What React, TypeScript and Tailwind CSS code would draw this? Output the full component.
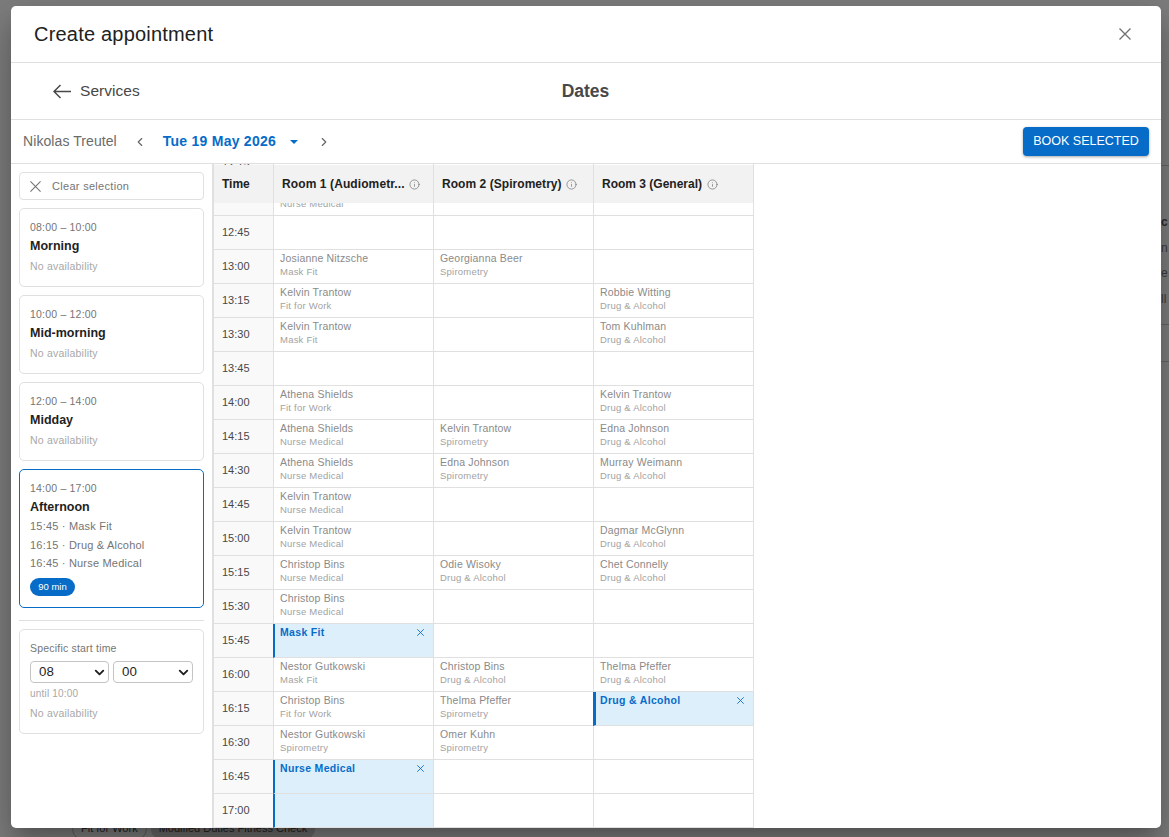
import { ChevronLeft, ChevronRight, ChevronDown, Info } from "lucide-react";
import type { ReactNode } from "react";

type Cell = null | [string, string] | { sel: string };

const rows: [string, Cell, Cell, Cell][] = [
  ["12:15", null, null, null],
  ["12:30", ["Athena Shields", "Nurse Medical"], null, null],
  ["12:45", null, null, null],
  ["13:00", ["Josianne Nitzsche", "Mask Fit"], ["Georgianna Beer", "Spirometry"], null],
  ["13:15", ["Kelvin Trantow", "Fit for Work"], null, ["Robbie Witting", "Drug & Alcohol"]],
  ["13:30", ["Kelvin Trantow", "Mask Fit"], null, ["Tom Kuhlman", "Drug & Alcohol"]],
  ["13:45", null, null, null],
  ["14:00", ["Athena Shields", "Fit for Work"], null, ["Kelvin Trantow", "Drug & Alcohol"]],
  ["14:15", ["Athena Shields", "Nurse Medical"], ["Kelvin Trantow", "Spirometry"], ["Edna Johnson", "Drug & Alcohol"]],
  ["14:30", ["Athena Shields", "Nurse Medical"], ["Edna Johnson", "Spirometry"], ["Murray Weimann", "Drug & Alcohol"]],
  ["14:45", ["Kelvin Trantow", "Nurse Medical"], null, null],
  ["15:00", ["Kelvin Trantow", "Nurse Medical"], null, ["Dagmar McGlynn", "Drug & Alcohol"]],
  ["15:15", ["Christop Bins", "Nurse Medical"], ["Odie Wisoky", "Drug & Alcohol"], ["Chet Connelly", "Drug & Alcohol"]],
  ["15:30", ["Christop Bins", "Nurse Medical"], null, null],
  ["15:45", { sel: "Mask Fit" }, null, null],
  ["16:00", ["Nestor Gutkowski", "Mask Fit"], ["Christop Bins", "Drug & Alcohol"], ["Thelma Pfeffer", "Drug & Alcohol"]],
  ["16:15", ["Christop Bins", "Fit for Work"], ["Thelma Pfeffer", "Spirometry"], { sel: "Drug & Alcohol" }],
  ["16:30", ["Nestor Gutkowski", "Spirometry"], ["Omer Kuhn", "Spirometry"], null],
  ["16:45", { sel: "Nurse Medical" }, null, null],
  ["17:00", { sel: "" }, null, null],
];

function Cross({ className, width = 1.4 }: { className: string; width?: number }) {
  return (
    <svg viewBox="0 0 12 12" fill="none" stroke="currentColor" strokeWidth={width} className={className}>
      <path d="M0.5 0.5 11.5 11.5M11.5 0.5 0.5 11.5" />
    </svg>
  );
}

function BodyCell({ cell, thick }: { cell: Cell; thick?: boolean }) {
  if (cell === null) return <div className="h-[34px] w-40 shrink-0 border-r border-b border-[#e0e0e0]" />;
  if (Array.isArray(cell))
    return (
      <div className="h-[34px] w-40 shrink-0 border-r border-b border-[#e0e0e0] pl-1.5 pt-[2px]">
        <div className="text-[10.5px] leading-[13px] tracking-[0.18px] text-[#8a8a8a]">{cell[0]}</div>
        <div className="text-[9.5px] leading-[13px] tracking-[0.22px] text-[#a2a2a2]">{cell[1]}</div>
      </div>
    );
  return (
    <div
      className={`relative -ml-[1px] h-[34px] w-[161px] shrink-0 border-r border-b border-r-[#e0e0e0] border-b-[#e0e0e0] bg-[#deeffc] pt-[2px] ${thick ? "border-l-[3px] border-l-[#066cc8] pl-[4px]" : "border-l-[2px] border-l-[#066cc8] pl-[5px]"}`}
    >
      {cell.sel && (
        <>
          <div className="text-[10.5px] font-bold leading-[13px] tracking-[0.32px] text-[#066cc8]">{cell.sel}</div>
          <Cross className="absolute right-[9px] top-[5px] h-[7px] w-[7px] text-[#066cc8]" width={1.5} />
        </>
      )}
    </div>
  );
}

function Slot({ time, title, children, active }: { time: string; title: string; children?: ReactNode; active?: boolean }) {
  return (
    <div className={`rounded-[5px] border px-2.5 pt-[12px] ${active ? "h-[139px] border-[#066cc8]" : "h-[79px] border-[#e0e0e0]"}`}>
      <div className="text-[10.5px] leading-[13px] tracking-[0.2px] text-[#757575]">{time}</div>
      <div className="mt-[3.5px] text-[12.5px] font-bold leading-[16px] text-[#1f1f1f]">{title}</div>
      {children ?? <div className="mt-[5.5px] text-[10.5px] leading-[14px] tracking-[0.2px] text-[#a8a8a8]">No availability</div>}
    </div>
  );
}

function Sel({ v, w }: { v: string; w: string }) {
  return (
    <div className={`flex h-[22px] items-center justify-between rounded-[4px] border border-[#c4c4c4] pl-2 pr-[1px] text-[13.3px] text-[#1f1f1f] ${w}`}>
      {v}
      <ChevronDown className="h-[15px] w-[15px] text-[#1f1f1f]" strokeWidth={3} />
    </div>
  );
}

export default function App() {
  return (
    <div className="relative h-[837px] w-[1169px] overflow-hidden bg-[#7e7e7e] font-['Liberation_Sans',Arial,sans-serif]">
      {/* dimmed page behind the dialog */}
      <div className="absolute left-[1161px] top-[165px] h-[197px] w-[8px] overflow-hidden border-y border-[#666666] text-[12px] text-[#2c2c2c]">
        <div className="absolute left-0 top-[47px] font-bold">c</div>
        <div className="absolute left-0 top-[73px] text-[#3c3c3c]">n</div>
        <div className="absolute left-0 top-[98px] text-[#3c3c3c]">e</div>
        <div className="absolute left-0 top-[124px] text-[#3c3c3c]">ll</div>
        <div className="absolute left-0 top-[158px] w-full border-t border-[#666666]" />
      </div>
      <div className="absolute left-[72px] top-[816px] flex items-center gap-[4px] text-[11px] text-[#222222]">
        <span className="rounded-full border border-[#5e5e5e] px-2 py-[3px]">Fit for Work</span>
        <span className="rounded-full bg-[#6a6a6a] px-2 py-[3px]">Modified Duties Fitness Check</span>
      </div>

      {/* dialog */}
      <div className="absolute left-[11px] top-[6px] flex h-[822px] w-[1150px] flex-col overflow-hidden rounded-[5px] bg-white shadow-[0_11px_15px_-7px_rgba(0,0,0,0.2),0_24px_38px_3px_rgba(0,0,0,0.14),0_9px_46px_8px_rgba(0,0,0,0.12)]">
        <header className="flex h-[57px] shrink-0 items-center justify-between border-b border-[#e0e0e0] pl-[23px] pr-[30px]">
          <h2 className="text-[20px] leading-[24px] tracking-[0.2px] text-[#212121]">Create appointment</h2>
          <Cross className="h-[12px] w-[12px] text-[#707070]" width={1.3} />
        </header>

        <div className="relative flex h-[57px] shrink-0 items-center justify-center border-b border-[#e0e0e0]">
          <div className="absolute left-[42px] top-[18px] flex items-center gap-[9px] text-[#484848]">
            <svg viewBox="0 0 18 15" fill="none" stroke="currentColor" strokeWidth={1.5} className="h-[15px] w-[18px]">
              <path d="M0.8 7.5H18M7.5 1 1 7.5 7.5 14" />
            </svg>
            <span className="text-[15.5px] leading-[20px] tracking-[0.05px]">Services</span>
          </div>
          <div className="-ml-[1px] text-[17.5px] font-bold leading-[22px] text-[#484848]">Dates</div>
        </div>

        <div className="flex h-[44px] shrink-0 items-center border-b border-[#e0e0e0] pl-[12px] pr-[12px]">
          <span className="text-[14px] tracking-[0.08px] text-[#6b6b6b]">Nikolas Treutel</span>
          <ChevronLeft className="ml-[16px] h-[14px] w-[14px] text-[#666666]" strokeWidth={2} />
          <span className="ml-[16px] text-[14px] font-bold tracking-[0.25px] text-[#066cc8]">Tue 19 May 2026</span>
          <span className="ml-[14px] h-0 w-0 border-x-[4px] border-t-[4px] border-x-transparent border-t-[#066cc8]" />
          <ChevronRight className="ml-[19px] h-[14px] w-[14px] text-[#666666]" strokeWidth={2} />
          <button className="ml-auto h-[29px] w-[126px] rounded-[4px] bg-[#066cc8] text-[12.5px] font-medium text-white shadow-[0_1px_3px_rgba(0,0,0,0.35)]">
            BOOK SELECTED
          </button>
        </div>

        <div className="flex min-h-0 flex-1">
          <aside className="flex w-[201px] shrink-0 flex-col gap-[8px] pl-[8px] pt-[8px]">
            <div className="flex h-[28px] w-[185px] items-center rounded-[4px] border border-[#e0e0e0] pl-[10px] text-[11px] tracking-[0.3px] text-[#757575]">
              <Cross className="mr-[11px] h-[11px] w-[11px]" width={1.2} />
              Clear selection
            </div>
            <div className="flex w-[185px] flex-col gap-[8px]">
              <Slot time="08:00 – 10:00" title="Morning" />
              <Slot time="10:00 – 12:00" title="Mid-morning" />
              <Slot time="12:00 – 14:00" title="Midday" />
              <Slot time="14:00 – 17:00" title="Afternoon" active>
                <div className="mt-[2.5px] text-[11px] leading-[18.7px] tracking-[0.2px] text-[#757575]">
                  <div>15:45 · Mask Fit</div>
                  <div>16:15 · Drug &amp; Alcohol</div>
                  <div>16:45 · Nurse Medical</div>
                </div>
                <div className="mt-[5px] w-[45px] rounded-full bg-[#066cc8] text-center text-[9.5px] leading-[18px] text-white">90 min</div>
              </Slot>
              <div className="mt-[4px] border-t border-[#e0e0e0] pt-[8px]">
                <div className="h-[105px] rounded-[5px] border border-[#e0e0e0] px-2.5 pt-[12px]">
                  <div className="text-[10.5px] leading-[13px] tracking-[0.2px] text-[#757575]">Specific start time</div>
                  <div className="mt-[6px] flex gap-[4px]"><Sel v="08" w="w-[79px]" /><Sel v="00" w="w-[80px]" /></div>
                  <div className="mt-[4px] text-[10px] leading-[13px] tracking-[0.2px] text-[#a8a8a8]">until 10:00</div>
                  <div className="mt-[6px] text-[10.5px] leading-[14px] tracking-[0.2px] text-[#a8a8a8]">No availability</div>
                </div>
              </div>
            </div>
          </aside>

          <div className="relative min-w-0 flex-1 overflow-hidden border-l-[2px] border-[#e0e0e0]">
            <div className="-mt-[16px]">
              {rows.map(([t, a, b, c]) => (
                <div key={t} className="flex">
                  <div className="flex h-[34px] w-[60px] shrink-0 items-center border-r border-b border-[#e0e0e0] bg-[#f9f9f9] pl-2 text-[11px] text-[#484848]">{t}</div>
                  <BodyCell cell={a} />
                  <BodyCell cell={b} />
                  <BodyCell cell={c} thick />
                </div>
              ))}
            </div>
            <div className="absolute left-0 top-[1px] flex h-[38px] bg-[#f2f2f2] text-[12px] font-bold text-[#212121]">
              <div className="flex w-[60px] items-center border-r border-[#e0e0e0] pl-2">Time</div>
              <div className="flex w-40 items-center gap-[4px] border-r border-[#e0e0e0] pl-2">
                <span className="tracking-[0.1px]">Room 1 (Audiometr...</span>
                <Info className="h-[11px] w-[11px] text-[#707070]" strokeWidth={1.5} />
              </div>
              <div className="flex w-40 items-center gap-[4px] border-r border-[#e0e0e0] pl-2">
                <span className="tracking-[0.05px]">Room 2 (Spirometry)</span>
                <Info className="h-[11px] w-[11px] text-[#707070]" strokeWidth={1.5} />
              </div>
              <div className="flex w-40 items-center gap-[5px] border-r border-[#e0e0e0] pl-2">
                Room 3 (General)
                <Info className="h-[11px] w-[11px] text-[#707070]" strokeWidth={1.5} />
              </div>
            </div>
          </div>
        </div>
      </div>
    </div>
  );
}
